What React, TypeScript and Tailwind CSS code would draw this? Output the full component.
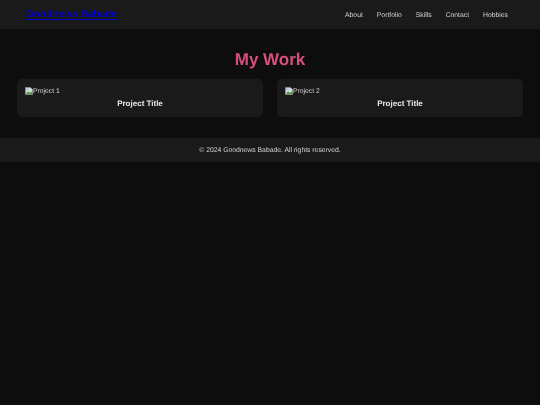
const NAV_LINKS = ["About", "Portfolio", "Skills", "Contact", "Hobbies"];
const PROJECTS = ["Project 1", "Project 2"];

function BrokenImageIcon() {
  return (
    <svg className="h-2 w-2 shrink-0" viewBox="0 0 8 8">
      <path d="M0.5 0.5H5.5L7.5 2.5V7.5H0.5Z" fill="#d8d8d8" stroke="#a0a0a0" strokeWidth="0.5" />
      <path d="M0.8 7.2L3 4.2L4.6 5.8L7.2 4.6V7.2Z" fill="#4f9a4a" />
      <path d="M1.2 1.2H3.6V3.2H1.2Z" fill="#a9c4ea" />
    </svg>
  );
}

function ProjectCard({ name }: { name: string }) {
  return (
    <div className="rounded-[5px] bg-[#1a1a1a] px-2 pb-[6px] pt-2">
      <div className="flex h-[8px] items-center text-[6.8px] leading-[8px] text-[#d4d4d4]">
        <BrokenImageIcon />
        <span className="pt-px">{name}</span>
      </div>
      <h3 className="mt-[2px] text-center text-[8px] font-bold leading-[14px] text-[#e8e8e8]">Project Title</h3>
    </div>
  );
}

export default function App() {
  return (
    <div className="min-h-[405px] bg-[#0d0d0d] font-['Liberation_Sans',Arial,sans-serif] text-[#e0e0e0] [text-rendering:geometricPrecision] will-change-transform">
      <header className="flex h-[29px] items-center justify-between bg-[#1a1a1a] pl-[26px] pr-8 pt-px">
        <a href="#" className="text-[10.1px] font-bold leading-[12px] text-[#0000c8] underline decoration-1 underline-offset-2">
          Goodnews Babade
        </a>
        <nav className="flex gap-[14px] pt-[2px] text-[6.8px]">
          {NAV_LINKS.map((link) => (
            <a key={link} href="#" className="text-[#d4d4d4]">
              {link}
            </a>
          ))}
        </nav>
      </header>

      <main className="px-[17px] pb-[21px] pt-[20px]">
        <h2 className="text-center text-[17px] font-bold leading-[21px] text-[#d94f7c]">My Work</h2>
        <div className="mt-[9px] grid grid-cols-2 gap-[14px]">
          {PROJECTS.map((name) => (
            <ProjectCard key={name} name={name} />
          ))}
        </div>
      </main>

      <footer className="flex h-[24px] items-center justify-center bg-[#1a1a1a] pt-[3px] text-[6.8px] text-[#d4d4d4]">
        © 2024 Goodnews Babade. All rights reserved.
      </footer>
    </div>
  );
}
